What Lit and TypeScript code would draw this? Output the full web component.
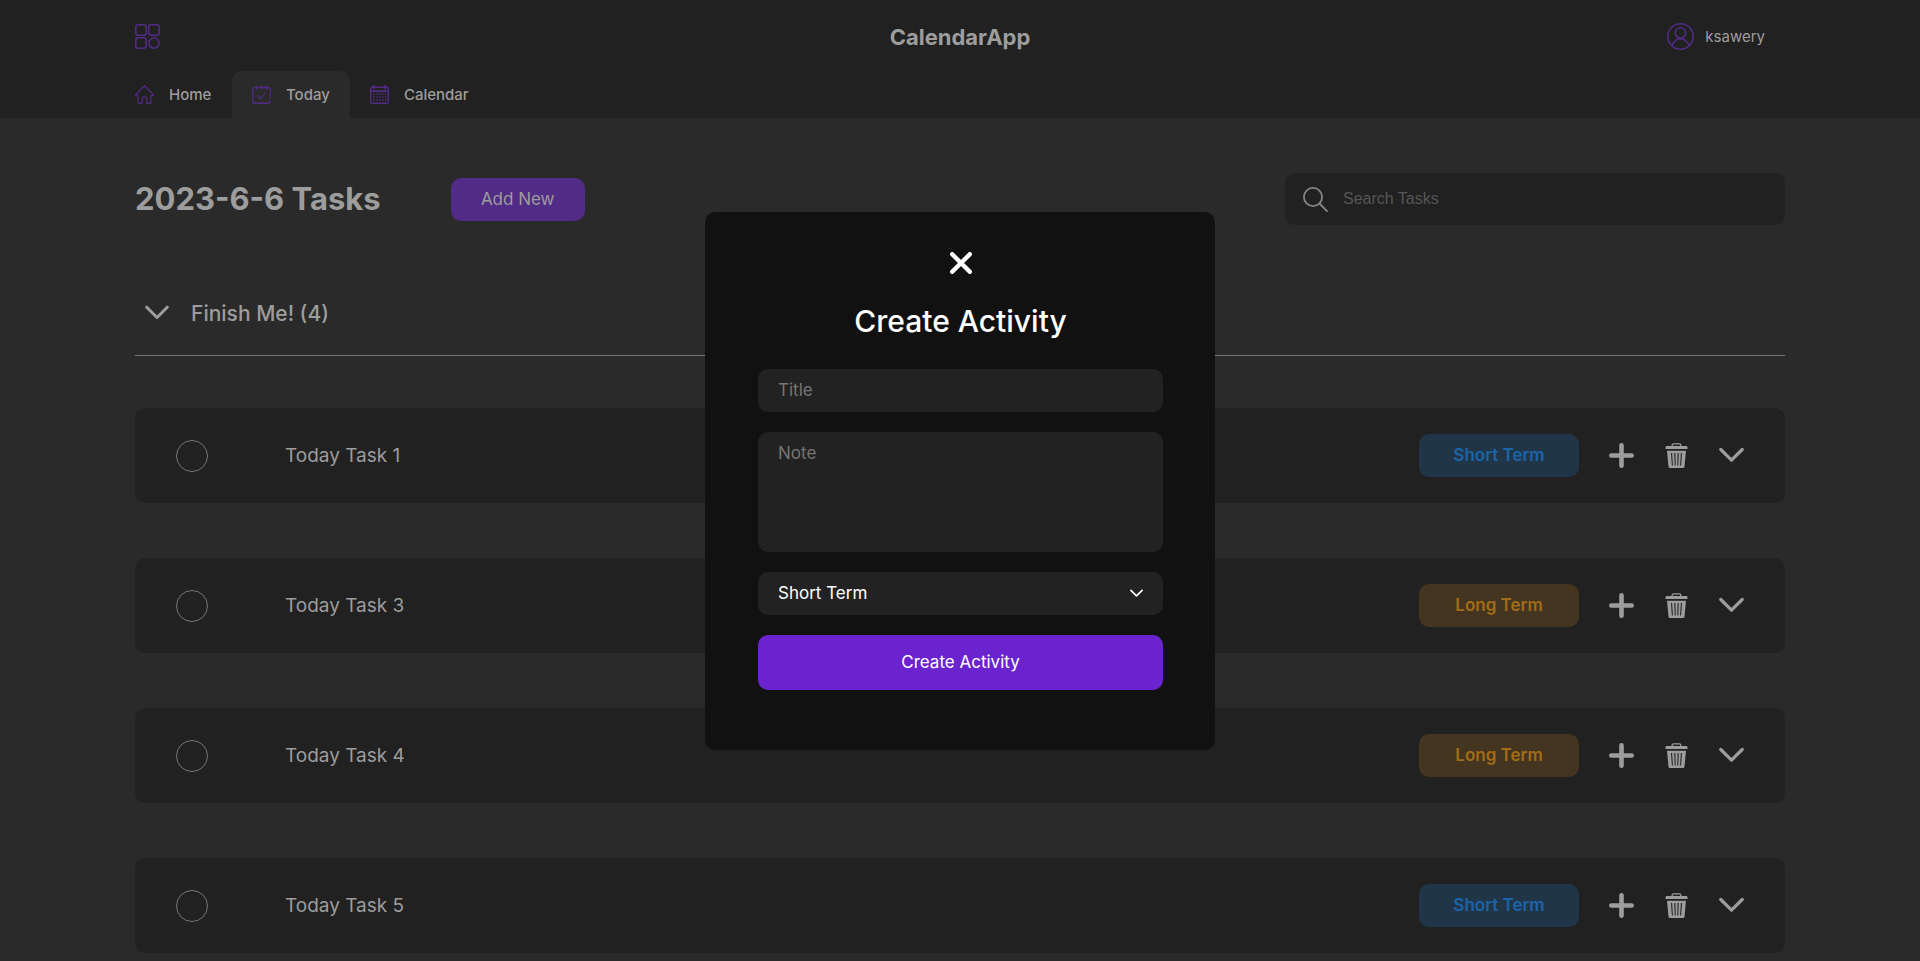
import { LitElement, html, css, svg } from "lit";
import { customElement, property, state } from "lit/decorators.js";

const shapes = {
  grid: svg`<g fill="none" stroke="currentColor" stroke-width="1.6"><rect x="0.8" y="0.8" width="10.4" height="10.4" rx="2.4"/><rect x="13.8" y="0.8" width="10.4" height="10.4" rx="2.4"/><rect x="0.8" y="13.8" width="10.4" height="10.4" rx="2.4"/><circle cx="19" cy="19" r="5.2"/></g>`,
  user: svg`<g fill="none" stroke="currentColor" stroke-width="1.4"><circle cx="12.5" cy="12.5" r="11.7"/><circle cx="12.5" cy="9.2" r="4.8"/><path d="M4.8 21.200a7.800 7.800 0 0 1 15.400 0"/></g>`,
  home: svg`<path d="M12.5 1 1 12.6c-.8 1 .2 2 1.300 1.400H4V23c0 .7.5 1.200 1.200 1.200H9.500v-6.700c0-1.300.8-2 2-2h2c1.200 0 2 .7 2 2v6.700h4.300c.7 0 1.200-.5 1.200-1.200v-9h1.700c1.100.600 2.100-.400 1.300-1.400z" fill="none" stroke="currentColor" stroke-width="1.600" stroke-linejoin="round"/>`,
  today: svg`<g fill="none" stroke="currentColor" stroke-width="1.700" stroke-linecap="round"><path d="M24 17V6.500a3 3 0 0 0-3-3H4a3 3 0 0 0-3 3V21a3 3 0 0 0 3 3h17a3 3 0 0 0 2.800-3"/><path d="M6.200.900v4.700M12.500.900v4.700M18.800.900v4.700M7.500 14.200l3.800 4 6-7.400"/></g>`,
  calendar: svg`<g fill="none" stroke="currentColor" stroke-width="1.800"><rect x="0.900" y="3" width="23.200" height="21" rx="2"/><path d="M1 8h23M5.200 0v5.500M19.800 0v5.500" stroke-width="2.200"/><path d="M4.500 11.800h17M4.500 15.800h17M4.500 19.800h17" stroke-width="2" stroke-dasharray="2 1.750"/></g>`,
  search: svg`<g fill="none" stroke="currentColor" stroke-width="1.800" stroke-linecap="round"><circle cx="10" cy="10" r="9.100"/><path d="m16.500 16.500 7.500 7.700"/></g>`,
  down: svg`<path d="m1.800 6.500 10.700 10.700L23.200 6.500" fill="none" stroke="currentColor" stroke-width="3.200" stroke-linecap="round" stroke-linejoin="round"/>`,
  plus: svg`<path d="M12.500 2.300v20.400M2.300 12.500h20.400" stroke="currentColor" stroke-width="4.600" stroke-linecap="round"/>`,
  trash: svg`<path d="M8.200 3.500V2q0-1.200 1.200-1.200h6.200q1.200 0 1.200 1.200v1.500" fill="none" stroke="currentColor" stroke-width="1.300"/><path d="M2.900 3h19.200a1.400 1.400 0 0 1 1.400 1.400V6h-22V4.400A1.400 1.400 0 0 1 2.900 3z" fill="currentColor"/><path fill-rule="evenodd" d="M3 7.700h19L20.500 23.500a1.500 1.500 0 0 1-1.500 1.500H6a1.500 1.500 0 0 1-1.500-1.500zM7 10l.9 12.500h1L8.100 10zM10.300 10l.4 12.500h1L11.400 10zM13.600 10l-.3 12.500h1L14.700 10zM16.900 10l-.8 12.500h1L18 10z" fill="currentColor"/>`,
  close: svg`<path d="m2.500 2.500 20 20M22.500 2.500l-20 20" stroke="currentColor" stroke-width="5" stroke-linecap="round"/>`,
};

type IconName = keyof typeof shapes;

@customElement("app-icon")
class AppIcon extends LitElement {
  static styles = css`
    :host { display: block; flex: none; width: 25px; height: 25px; }
    svg { display: block; width: 100%; height: 100%; }
  `;
  @property() name: IconName = "plus";
  render() {
    return html`<svg viewBox="0 0 25 25" aria-hidden="true">${shapes[this.name]}</svg>`;
  }
}

type Term = "Short Term" | "Long Term";

@customElement("task-card")
class TaskCard extends LitElement {
  static styles = css`
    :host { display: block; }
    * { box-sizing: border-box; }
    .card { display: flex; align-items: center; min-height: 95px; padding: 26px 41px; border-radius: 10px; background: #212121; color: #9d9d9d; }
    .check { appearance: none; flex: none; width: 32px; height: 32px; margin: 0 77px 0 0; border: 1px solid #747474; border-radius: 50%; }
    .check:checked { background: #522b86; }
    .name { flex: 1; font-size: 19px; line-height: 24px; }
    .side { display: flex; align-items: center; gap: 30px; }
    .badge { width: 160px; border-radius: 10px; font-size: 17px; font-weight: 600; line-height: 43px; text-align: center; }
    .short { background: #203648; color: #1b64a8; }
    .long { background: #43351f; color: #a36c16; }
    button { padding: 0; border: 0; background: none; color: #9d9d9d; cursor: pointer; }
  `;
  @property() name = "";
  @property() term: Term = "Short Term";
  render() {
    return html`<article class="card">
      <input class="check" id="done" type="checkbox" />
      <label class="name" for="done">${this.name}</label>
      <div class="side">
        <span class="badge ${this.term === "Short Term" ? "short" : "long"}">${this.term}</span>
        <button type="button" aria-label="Add"><app-icon name="plus"></app-icon></button>
        <button type="button" aria-label="Delete"><app-icon name="trash"></app-icon></button>
        <button type="button" aria-label="Expand"><app-icon name="down"></app-icon></button>
      </div>
    </article>`;
  }
}

@customElement("activity-dialog")
class ActivityDialog extends LitElement {
  static styles = css`
    * { box-sizing: border-box; }
    .overlay { position: fixed; inset: 0; display: grid; place-items: center; }
    .panel { display: flex; flex-direction: column; align-items: center; width: 510px; max-width: 100%; padding: 40px 52px 60px 53px; border-radius: 10px; background: #111; color: #fff; }
    .close { padding: 0; border: 0; background: none; color: #fff; cursor: pointer; }
    .close app-icon { width: 22px; height: 22px; }
    .title { margin: 30px 0; font-size: 30px; font-weight: 500; line-height: 35px; }
    form { display: grid; gap: 20px; width: 100%; }
    .field { display: grid; align-items: center; }
    .control { grid-area: 1 / 1; width: 100%; height: 43px; margin: 0; padding: 10px 20px; border: 0; border-radius: 10px; outline: 0; background: #222; color: #fff; font: 17px/23px Inter, sans-serif; }
    .control::placeholder { color: #757575; opacity: 1; }
    .note { height: 120px; resize: none; }
    .term { appearance: none; }
    .arrow { grid-area: 1 / 1; justify-self: end; width: 13px; height: 13px; margin-right: 20px; pointer-events: none; }
    .submit { height: 55px; border: 0; border-radius: 10px; background: #6b22cf; color: #fff; font: 17px/23px Inter, sans-serif; cursor: pointer; }
  `;
  render() {
    return html`<div class="overlay">
      <section class="panel" role="dialog" aria-modal="true" aria-labelledby="title">
        <button class="close" type="button" aria-label="Close" @click=${() => this.dispatchEvent(new Event("close"))}><app-icon name="close"></app-icon></button>
        <h2 class="title" id="title">Create Activity</h2>
        <form @submit=${(e: Event) => e.preventDefault()}>
          <div class="field"><input class="control" type="text" placeholder="Title" aria-label="Title" /></div>
          <div class="field"><textarea class="control note" placeholder="Note" aria-label="Note"></textarea></div>
          <div class="field">
            <select class="control term" aria-label="Term"><option>Short Term</option><option>Long Term</option></select>
            <app-icon class="arrow" name="down"></app-icon>
          </div>
          <button class="submit" type="submit">Create Activity</button>
        </form>
      </section>
    </div>`;
  }
}

@customElement("app-root")
class AppRoot extends LitElement {
  static styles = css`
    :host { display: block; height: 100vh; overflow: hidden; background: #2a2a2a; color: #9d9d9d; font-family: Inter, sans-serif; }
    * { box-sizing: border-box; }
    button, a { color: inherit; font: inherit; text-decoration: none; }
    .wrap { width: 90%; max-width: 1650px; margin: 0 auto; }
    header { background: #212121; }
    .bar { display: grid; grid-template-columns: 1fr auto 1fr; align-items: center; height: 71px; padding-top: 2px; }
    .accent { color: #522b86; }
    .brand { font-size: 22px; font-weight: 700; line-height: 26px; }
    .user { justify-self: end; display: flex; align-items: center; gap: 11px; padding-right: 20px; font-size: 15px; }
    .user app-icon { width: 27px; height: 27px; }
    .tabs { display: flex; margin-left: -20px; }
    .tab { display: flex; align-items: center; gap: 15px; min-width: 117px; height: 47px; padding: 0 20px; border-radius: 10px 10px 0 0; font-size: 15px; font-weight: 500; }
    .tab app-icon { width: 19px; height: 19px; }
    .active { background: #2a2a2a; }
    .top { display: flex; align-items: center; margin-top: 55px; }
    h1 { margin: 0 70px 0 0; font-size: 31px; font-weight: 700; line-height: 40px; }
    .add { width: 134px; height: 43px; border: 0; border-radius: 10px; background: #522b86; font-size: 17px; cursor: pointer; }
    .search { display: flex; align-items: center; gap: 15px; width: 500px; height: 52px; margin-left: auto; padding: 0 18px; border-radius: 10px; background: #212121; color: #858585; }
    .query { flex: 1; min-width: 0; padding: 0; border: 0; outline: 0; background: none; color: #9d9d9d; font: 16px "Liberation Sans", sans-serif; }
    .query::placeholder { color: #565656; opacity: 1; }
    .group { display: flex; align-items: center; gap: 22px; width: 100%; height: 85px; margin-top: 46px; padding: 0 0 0 10px; border: 0; border-bottom: 1px solid #747474; background: none; font-size: 21px; font-weight: 500; text-align: left; cursor: pointer; }
    .group app-icon { width: 24px; height: 24px; }
    .list { display: grid; gap: 55px; margin-top: 52px; }
  `;
  @state() private open = true;
  private tasks: { name: string; term: Term }[] = [
    { name: "Today Task 1", term: "Short Term" },
    { name: "Today Task 3", term: "Long Term" },
    { name: "Today Task 4", term: "Long Term" },
    { name: "Today Task 5", term: "Short Term" },
  ];
  render() {
    return html`
      <header>
        <div class="wrap">
          <div class="bar">
            <app-icon class="accent" name="grid"></app-icon>
            <span class="brand">CalendarApp</span>
            <a class="user" href="#user"><app-icon class="accent" name="user"></app-icon>ksawery</a>
          </div>
          <nav class="tabs">
            <a class="tab" href="#home"><app-icon class="accent" name="home"></app-icon>Home</a>
            <a class="tab active" href="#today"><app-icon class="accent" name="today"></app-icon>Today</a>
            <a class="tab" href="#calendar"><app-icon class="accent" name="calendar"></app-icon>Calendar</a>
          </nav>
        </div>
      </header>
      <main class="wrap">
        <div class="top">
          <h1>2023-6-6 Tasks</h1>
          <button class="add" type="button" @click=${() => (this.open = true)}>Add New</button>
          <label class="search"><app-icon name="search"></app-icon><input class="query" type="search" placeholder="Search Tasks" aria-label="Search Tasks" /></label>
        </div>
        <button class="group" type="button"><app-icon name="down"></app-icon>Finish Me! (${this.tasks.length})</button>
        <div class="list">
          ${this.tasks.map((t) => html`<task-card .name=${t.name} .term=${t.term}></task-card>`)}
        </div>
      </main>
      ${this.open ? html`<activity-dialog @close=${() => (this.open = false)}></activity-dialog>` : ""}
    `;
  }
}
